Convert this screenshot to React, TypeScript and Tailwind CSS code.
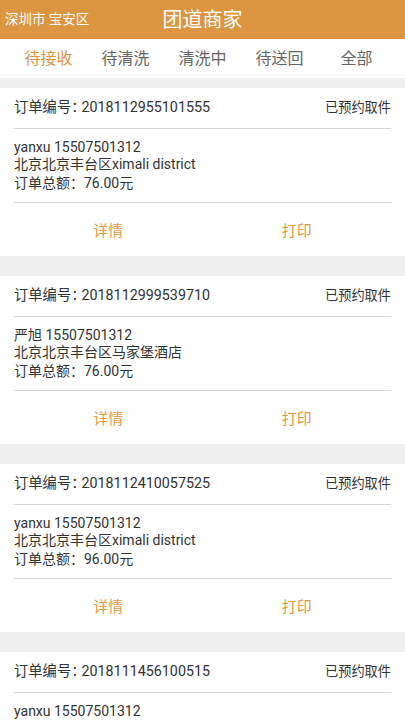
import React from "react";

const orders = [
  { no: "2018112955101555", name: "yanxu 15507501312", addr: "北京北京丰台区ximali district", total: "76.00元" },
  { no: "2018112999539710", name: "严旭 15507501312", addr: "北京北京丰台区马家堡酒店", total: "76.00元" },
  { no: "2018112410057525", name: "yanxu 15507501312", addr: "北京北京丰台区ximali district", total: "96.00元" },
  { no: "2018111456100515", name: "yanxu 15507501312", addr: "北京北京丰台区ximali district", total: "76.00元" },
];

const tabs = ["待接收", "待清洗", "清洗中", "待送回", "全部"];

export default function App() {
  return (
    <div
      className="w-[405px] h-[720px] overflow-hidden bg-[#efefef]"
      style={{ fontFamily: 'Roboto, "Noto Sans CJK SC", sans-serif' }}
    >
      <div className="h-[39px] bg-[#dc9540] flex items-center relative">
        <div className="pl-[5px] text-[13.5px] text-white whitespace-nowrap">深圳市 宝安区</div>
        <div className="absolute left-0 right-0 top-0 h-[39px] flex items-center justify-center text-[20px] text-white pointer-events-none">
          团道商家
        </div>
      </div>
      <div className="h-[39px] bg-white grid grid-cols-5 px-[10px] items-center">
        {tabs.map((t, i) => (
          <div
            key={t}
            className={`text-center text-[16px] leading-[39px] ${i === 0 ? "text-[#dc9540]" : "text-[#666666]"}`}
          >
            {t}
          </div>
        ))}
      </div>
      <div className="pt-[10px] flex flex-col gap-[20px]">
        {orders.map((o) => (
          <div key={o.no} className="bg-white">
            <div className="h-[40px] px-[14px] flex items-center justify-between text-[#333333]">
              <span className="text-[14.3px] whitespace-nowrap">
                订单编号<span className="tracking-[-4px]">：</span>
                {o.no}
              </span>
              <span className="text-[13.2px]">已预约取件</span>
            </div>
            <div className="mx-[14px] h-px bg-[#d6d6d6]" />
            <div className="px-[14px] pt-[10px] pb-[10px] text-[14px] text-[#333333]">
              <div className="leading-[17px]">{o.name}</div>
              <div className="leading-[17px]">{o.addr}</div>
              <div className="leading-[17px] mt-[2px]">订单总额：{o.total}</div>
            </div>
            <div className="mx-[14px] h-px bg-[#d6d6d6]" />
            <div className="h-[53px] pt-[3px] px-[14px] flex items-center text-[15px] text-[#e09a45]">
              <div className="flex-1 text-center">详情</div>
              <div className="flex-1 text-center">打印</div>
            </div>
          </div>
        ))}
      </div>
    </div>
  );
}
